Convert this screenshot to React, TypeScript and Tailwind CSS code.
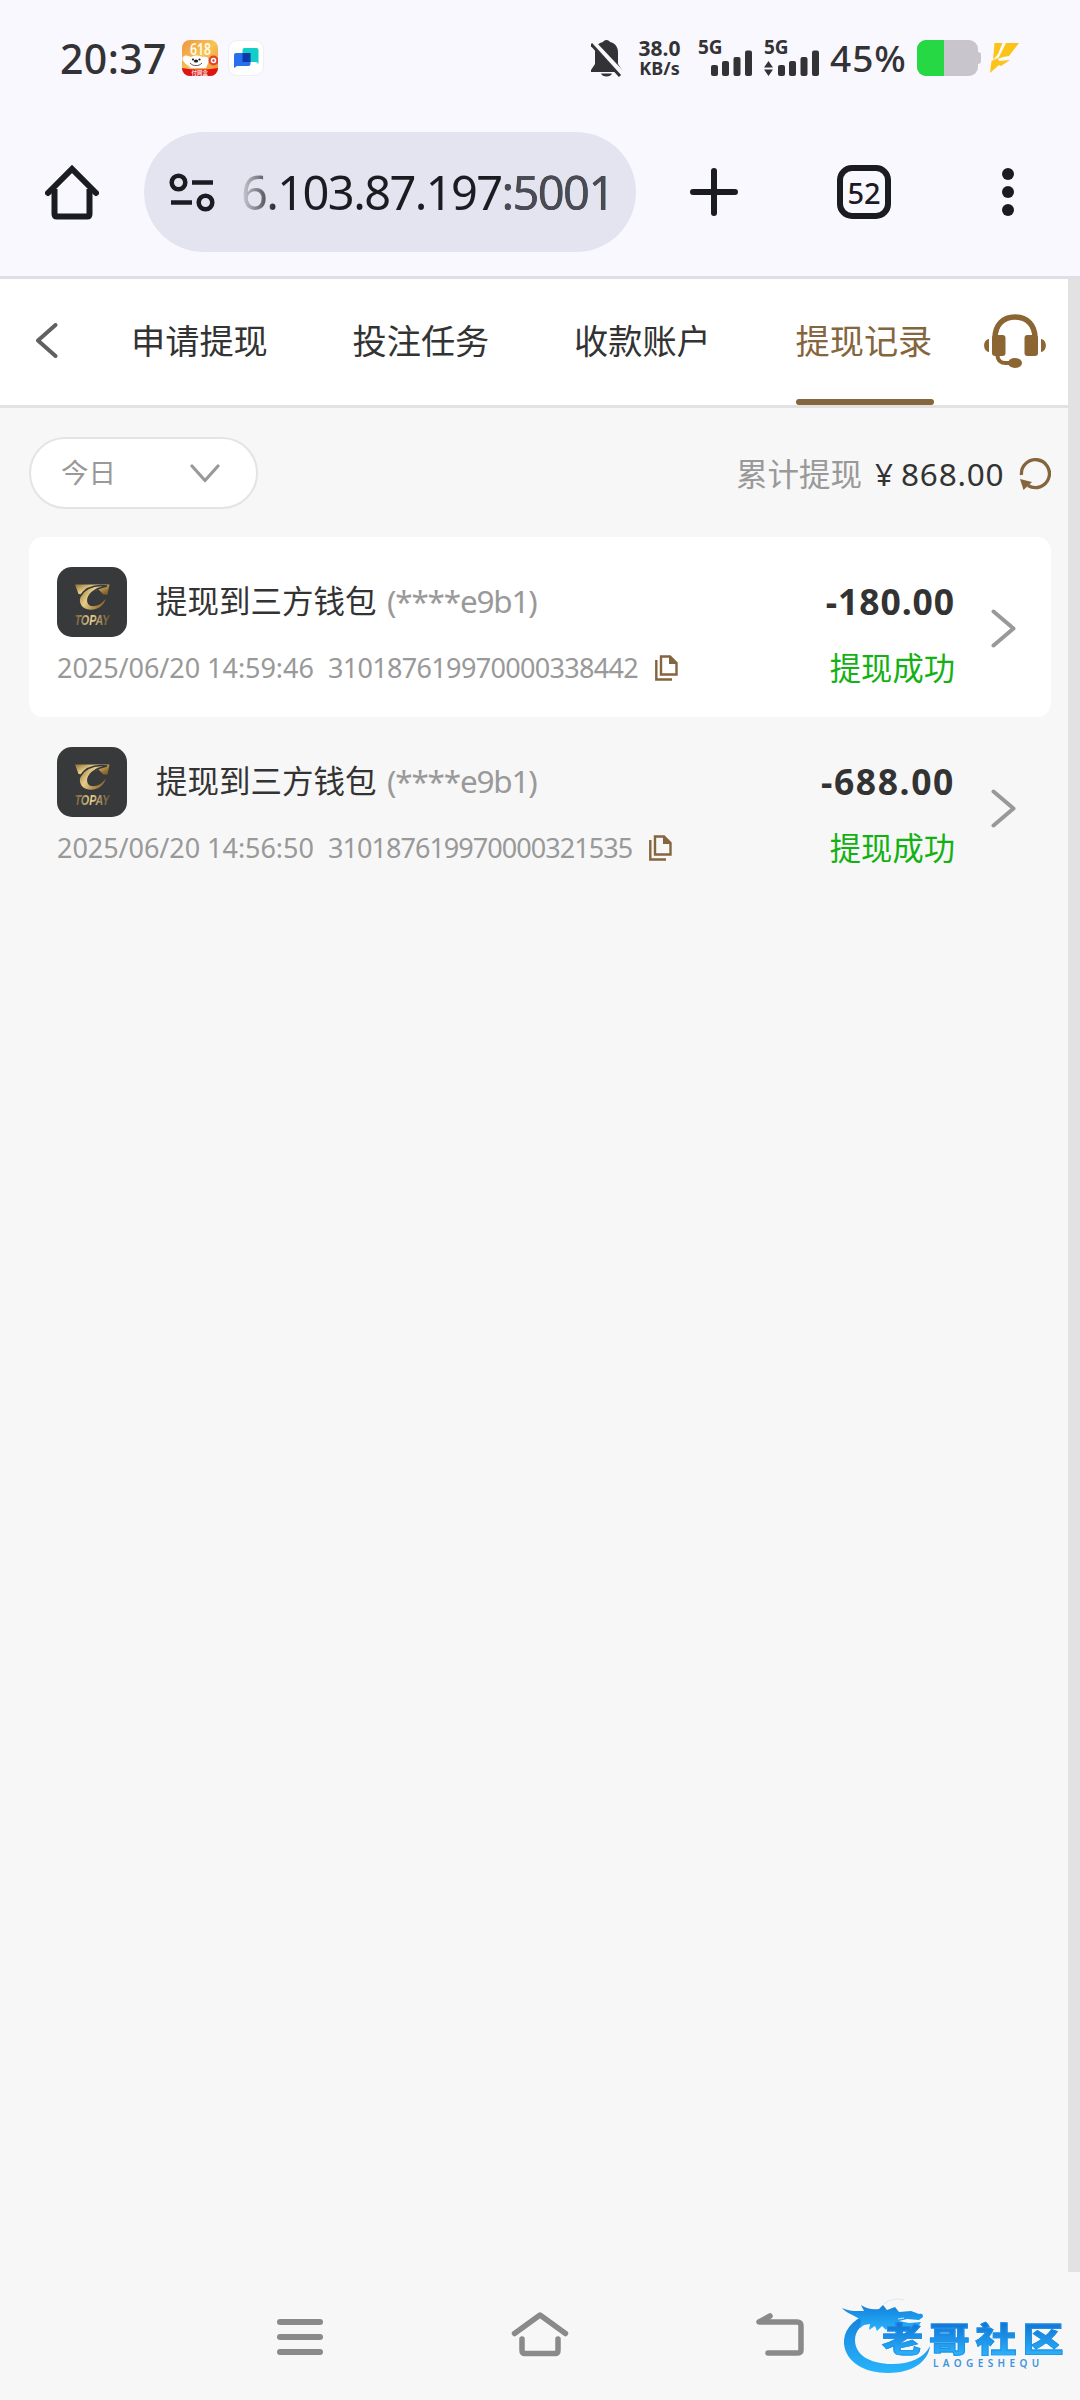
interface Withdrawal {
  id: string
  time: string
  amount: string
  account: string
}

const withdrawals: Withdrawal[] = [
  { id: "310187619970000338442", time: "2025/06/20 14:59:46", amount: "-180.00", account: "(****e9b1)" },
  { id: "310187619970000321535", time: "2025/06/20 14:56:50", amount: "-688.00", account: "(****e9b1)" },
]

const tabs = ["申请提现", "投注任务", "收款账户", "提现记录"]

function SignalBars() {
  return (
    <svg className="w-[41px] h-[26px]" viewBox="0 0 41 26" fill="#333335">
      <rect x="0" y="15" width="7" height="11" rx="2" />
      <rect x="11" y="11" width="7" height="15" rx="2" />
      <rect x="22.5" y="7" width="7" height="19" rx="2" />
      <rect x="34" y="0.5" width="7" height="25.5" rx="2" />
    </svg>
  )
}

function ShopAppIcon() {
  return (
    <svg className="w-9 h-9 ml-[17px]" viewBox="0 0 36 36">
      <defs>
        <linearGradient id="shop" x1="0" y1="0" x2="1" y2="1">
          <stop offset="0" stopColor="#ee9440" />
          <stop offset="0.5" stopColor="#f8c456" />
          <stop offset="1" stopColor="#ee8a35" />
        </linearGradient>
        <clipPath id="shopClip">
          <rect width="36" height="36" rx="8" />
        </clipPath>
      </defs>
      <g clipPath="url(#shopClip)">
        <rect width="36" height="36" fill="url(#shop)" />
        <path d="M1 17c3-3 5-1 8 0 3-2 8-2 11 0 4-1 7 0 7 4l-3 7H9c-3-3-5-3-7-6-2-2-2-4-1-5z" fill="#fff" />
        <circle cx="11" cy="19.500" r="1.100" fill="#222" />
        <circle cx="17.500" cy="19.500" r="1.100" fill="#222" />
        <ellipse cx="14" cy="21" rx="2.200" ry="1.500" fill="#222" />
        <path d="M8 23c3 3.500 9 3.500 12 0" stroke="#555" fill="none" />
        <circle cx="31.500" cy="20.500" r="5" fill="#e2432c" />
        <circle cx="31.500" cy="20.500" r="2" fill="none" stroke="#fff" strokeWidth="1.500" />
        <path d="M0 28q18 3 36 0v8H0z" fill="#dd1414" />
      </g>
      <text x="8" y="14.500" fontSize="16" fontWeight="600" fill="#fffbe6" fontFamily="Noto Sans" textLength="21" lengthAdjust="spacingAndGlyphs">
        618
      </text>
      <text x="9.500" y="34.500" fontSize="5.500" fontWeight="700" fill="#fbd9d9" fontFamily="Noto Sans CJK SC">
        付网盒
      </text>
    </svg>
  )
}

function ChatAppIcon() {
  return (
    <div className="w-9 h-9 ml-[10px] rounded-[9px] bg-white border border-[#eeeef4] flex items-center justify-center">
      <svg className="w-[25px] h-5" viewBox="0 0 25 20">
        <path d="M8.500 2q0-2 2-2h12q2 0 2 2v14l-2-2h-14z" fill="#12cfc6" />
        <path d="M0 7q0-2 2-2h14.500v11q0 2-2 2H3l-3 2z" fill="#2970ee" />
        <path d="M8.500 5h8v9h-8z" fill="#0b3ba8" />
      </svg>
    </div>
  )
}

function StatusBar() {
  return (
    <div className="flex h-[116px] items-center pl-[60px] text-[#333335]">
      <span className="w-[105px] text-[41px] leading-none font-medium tracking-[0.4px] whitespace-nowrap">20:37</span>
      <ShopAppIcon />
      <ChatAppIcon />
      <svg className="w-[31px] h-[37px] ml-[327px]" viewBox="0 0 31 37">
        <path d="M15.500 0c2 0 3 1 3.500 2 5 1 8 5 8 10v12l4 6v2H0v-2l4-6V12C4 7 7 3 12 2c.5-1 1.500-2 3.500-2z" fill="#333335" />
        <path d="M10 33.500h11c-1 4-10 4-11 0z" fill="#333335" />
        <path d="M0 1l32 34" stroke="#f9f8ff" strokeWidth="6" />
        <path d="M0 4l29 32" stroke="#333335" strokeWidth="3" />
      </svg>
      <div className="ml-[14px] w-[47px] flex flex-col items-center font-bold whitespace-nowrap">
        <span className="text-[21px] leading-[21px]">38.0</span>
        <span className="text-[18px] leading-[19px]">KB/s</span>
      </div>
      <div className="ml-[15px] h-9 w-[54px] flex flex-col">
        <span className="text-[19px] leading-[14px] h-[10px] font-bold">5G</span>
        <div className="pl-[13px]">
          <SignalBars />
        </div>
      </div>
      <div className="ml-[12px] h-9 w-[55px] flex flex-col">
        <span className="text-[19px] leading-[14px] h-[10px] font-bold">5G</span>
        <div className="flex items-end gap-[5px]">
          <svg className="w-[9px] h-[15px]" viewBox="0 0 9 15" fill="#333335">
            <path d="M4.500 0L9 6.500H0zM4.500 15L9 8.500H0z" />
          </svg>
          <SignalBars />
        </div>
      </div>
      <span className="ml-[11px] w-[76px] pb-[2px] text-[37px] leading-none font-medium tracking-[1px] whitespace-nowrap">45%</span>
      <div className="ml-[11px] flex items-center">
        <div className="w-[61px] h-9 rounded-[9px] bg-[#c9c5cd] overflow-hidden">
          <div className="w-[27px] h-full bg-[#27d845]" />
        </div>
        <div className="w-[3px] h-3 rounded-r-sm bg-[#c9c5cd]" />
      </div>
      <svg className="w-[30px] h-[30px] ml-[9px]" viewBox="0 0 30 30" fill="#fcc419">
        <path d="M4.500 0h8L8 11l-5 6zM16 0h13L19 13l-6 1-5 2z" />
        <path d="M1.500 18l6-3 1.500 3 11-1-9 6-2-1-9 8z" />
      </svg>
    </div>
  )
}

function BrowserBar() {
  return (
    <div className="flex h-[160px] items-start pt-4 pl-[45px] text-[#1b1b22]">
      <div className="flex h-[120px] items-center">
        <svg className="w-[54px] h-[56px]" viewBox="0 0 54 56" fill="none" stroke="#1b1b22" strokeWidth="6">
          <path d="M3 29L27 5l24 24" strokeLinecap="round" />
          <path d="M9.500 25v25q0 2.500 2.500 2.500h30q2.500 0 2.500-2.500V25" />
        </svg>
        <div className="ml-[45px] w-[492px] h-[120px] rounded-full bg-[#e4e4f0] flex items-center pl-[25px]">
          <svg className="w-[46px] h-[39px]" viewBox="0 0 46 39" fill="none" stroke="#1b1b22" strokeWidth="4.500">
            <circle cx="9.500" cy="9.500" r="6.800" />
            <circle cx="36.500" cy="29.500" r="6.800" />
            <path d="M23 9.500h21M2 29.500h21" />
          </svg>
          <span className="ml-[26px] w-[372px] text-[47px] leading-none tracking-[-1.600px] whitespace-nowrap bg-linear-to-r from-[#1b1b22]/10 via-[#1b1b22] via-10% to-[#1b1b22] bg-clip-text text-transparent">
            6.103.87.197<span className="text-[#4b4b55]">:5001</span>
          </span>
        </div>
        <svg className="w-12 h-12 ml-[54px]" viewBox="0 0 48 48" stroke="#1b1b22" strokeWidth="6" strokeLinecap="round">
          <path d="M24 3v42M3 24h42" />
        </svg>
        <div className="ml-[99px] w-[54px] h-[54px] rounded-[15px] border-[6px] border-[#1b1b22] flex items-center justify-center text-[29px] leading-none font-medium">
          52
        </div>
        <svg className="w-3 h-12 ml-[111px]" viewBox="0 0 12 48" fill="#1b1b22">
          <circle cx="6" cy="6" r="6" />
          <circle cx="6" cy="24" r="6" />
          <circle cx="6" cy="42" r="6" />
        </svg>
      </div>
    </div>
  )
}

function TabHeader() {
  return (
    <header className="flex h-[129px] bg-white border-b-[3px] border-[#e2e2e2] pl-9">
      <svg className="w-[22px] h-[35px] mt-[44px]" viewBox="0 0 22 35" fill="none" stroke="#606060" strokeWidth="4" strokeLinecap="round" strokeLinejoin="round">
        <path d="M19.500 2L2 17.500l17.500 15.500" />
      </svg>
      <nav className="ml-[73px] flex gap-[83.500px]">
        {tabs.map((tab) => (
          <div
            key={tab}
            className={
              tab === "提现记录"
                ? "flex w-[138px] flex-col justify-between text-[#84653d]"
                : "flex w-[138px] flex-col justify-between text-[#333333]"
            }
          >
            <span className="mt-[37px] text-[34.200px] leading-[50px] whitespace-nowrap">{tab}</span>
            {tab === "提现记录" && <div className="h-[6px] rounded-full bg-[#84653d]" />}
          </div>
        ))}
      </nav>
      <svg className="w-[62px] h-[55px] ml-[50px] mt-[35px]" viewBox="0 0 62 55" fill="#8b6632">
        <path d="M11 24C11 11 19 3 31 3s20 8 20 21" fill="none" stroke="#8b6632" strokeWidth="5.500" />
        <rect x="8" y="21" width="13.500" height="21" rx="3" />
        <rect x="40.500" y="21" width="13.500" height="21" rx="3" />
        <path d="M5 25v13c-6.500-1-6.500-12 0-13zM57 25v13c6.500-1 6.500-12 0-13z" />
        <path d="M13.500 41c0 6 4 8 8 8h6" fill="none" stroke="#8b6632" strokeWidth="4" />
        <ellipse cx="31" cy="49" rx="7" ry="5" />
      </svg>
    </header>
  )
}

function FilterRow() {
  return (
    <div className="flex items-center justify-between pt-[29px]">
      <div className="flex h-[72px] w-[229px] items-center justify-between rounded-full border-2 border-[#e4e4e4] bg-white pl-[30px] pr-[36px]">
        <span className="text-[27.500px] leading-none text-[#999999]">今日</span>
        <svg className="w-[30px] h-[19px]" viewBox="0 0 30 19" fill="none" stroke="#999999" strokeWidth="3.200" strokeLinecap="round" strokeLinejoin="round">
          <path d="M2 2l13 14.500L28 2" />
        </svg>
      </div>
      <div className="flex items-center pt-[2px] text-[31.500px] leading-none text-[#333333]">
        <span className="w-[126px] text-[#999999] whitespace-nowrap">累计提现</span>
        <span className="ml-[13px] w-[20px]">¥</span>
        <span className="ml-[6px] w-[106px] tracking-[0.800px] whitespace-nowrap">868.00</span>
        <svg className="w-8 h-8 ml-[12px]" viewBox="0 0 32 32" fill="none" stroke="#84653d" strokeWidth="3.300">
          <path d="M2.500 17A14 14 0 1 1 9 27.500" />
          <path d="M1 21l12 3-8.500 8z" fill="#84653d" stroke="none" />
        </svg>
      </div>
    </div>
  )
}

function TopayLogo() {
  return (
    <svg className="w-[70px] h-[70px]" viewBox="0 0 70 70">
      <defs>
        <linearGradient id="gold" x1="0" y1="0" x2="1" y2="0.600">
          <stop offset="0" stopColor="#8f6c35" />
          <stop offset="0.450" stopColor="#e6cd88" />
          <stop offset="1" stopColor="#8a6428" />
        </linearGradient>
        <linearGradient id="goldText" x1="0" y1="0" x2="1" y2="0">
          <stop offset="0" stopColor="#6b5434" />
          <stop offset="0.450" stopColor="#ecd592" />
          <stop offset="1" stopColor="#5c482c" />
        </linearGradient>
      </defs>
      <rect width="70" height="70" rx="15" fill="#38393b" />
      <path d="M18 17.500h34.500l-2 10h-4l-5-5-12 5.500-8-1z" fill="url(#gold)" />
      <path d="M50 19c-12-1.500-22 2-27 10.500-3 7 2 13.500 10 14 9 .5 16-5 17-15-4 7-9 10-14 10-4 0-6-3-5-7 2-6 9-10.500 19-12.500z" fill="url(#gold)" stroke="#38393b" strokeWidth="1.500" />
      <text x="17.500" y="58" fontSize="15" fontStyle="italic" fontWeight="700" fill="url(#goldText)" fontFamily="Liberation Sans Narrow, Liberation Sans" textLength="35" lengthAdjust="spacingAndGlyphs">
        TOPAY
      </text>
    </svg>
  )
}

function CopyIcon() {
  return (
    <svg className="w-[23px] h-[26px]" viewBox="0 0 23 26" fill="none" stroke="#84653d" strokeWidth="2.400">
      <path d="M6 1.500h9l6.500 6.500v11.500H6z" />
      <path d="M14 1v8h8z" fill="#84653d" stroke="none" />
      <path d="M1.300 5v19.500H17" />
    </svg>
  )
}

function WithdrawalRow({ item, highlighted }: { item: Withdrawal; highlighted: boolean }) {
  return (
    <div className={highlighted ? "flex h-[180px] rounded-[14px] bg-white pl-7" : "flex h-[180px] rounded-[14px] pl-7"}>
      <div className="w-[640px] pt-[30px]">
        <div className="flex h-[70px] items-center">
          <TopayLogo />
          <span className="ml-[29px] w-[221px] pb-[2px] text-[31.500px] leading-none text-[#333333] whitespace-nowrap">提现到三方钱包</span>
          <span className="ml-[10px] pb-[3px] text-[31.500px] leading-none tracking-[-1.200px] text-[#999999]">{item.account}</span>
        </div>
        <div className="mt-[13px] flex h-[34px] items-center text-[27px] leading-none text-[#999999] whitespace-nowrap">
          <span className="w-[271px] tracking-[-0.050px]">{item.time}</span>
          <span className={highlighted ? "tracking-[-0.680px]" : "tracking-[-0.960px]"}>{item.id}</span>
          <div className="ml-[17px] pt-[2px]">
            <CopyIcon />
          </div>
        </div>
      </div>
      <div className="w-[258px] pt-[39px] text-right">
        <div
          className={
            highlighted
              ? "text-[35.500px] leading-[50px] tracking-[0.900px] font-bold text-[#333333]"
              : "text-[35.500px] leading-[50px] tracking-[1.600px] font-bold text-[#333333]"
          }
        >
          {item.amount}
        </div>
        <div className="mt-[17px] text-[31.300px] leading-[50px] text-[#13b113]">提现成功</div>
      </div>
      <svg className="w-[25px] h-[39px] ml-[36px] mt-[72px]" viewBox="0 0 25 39" fill="none" stroke="#999999" strokeWidth="4" strokeLinecap="round" strokeLinejoin="round">
        <path d="M2.500 2.500L22.500 19.500 2.500 36.500" />
      </svg>
    </div>
  )
}

function SystemNav() {
  return (
    <div className="flex h-[128px] items-start bg-[#f7f7f7] pl-[277px] pt-10">
      <div className="mt-[7px] flex w-[46px] flex-col gap-[9px]">
        <div className="h-[6px] rounded-[3px] bg-[#8a8a8a]" />
        <div className="h-[6px] rounded-[3px] bg-[#8a8a8a]" />
        <div className="h-[6px] rounded-[3px] bg-[#8a8a8a]" />
      </div>
      <svg className="w-[58px] h-[46px] ml-[188px]" viewBox="0 0 58 46" fill="none" stroke="#8a8a8a" strokeWidth="5.500" strokeLinecap="round" strokeLinejoin="round">
        <path d="M3.500 21.500L29 3l25.500 18.500" />
        <path d="M11 27v11.500q0 3 3 3h30q3 0 3-3V27" />
      </svg>
      <svg className="w-[50px] h-[46px] ml-[187px]" viewBox="0 0 50 46" fill="none" stroke="#8a8a8a" strokeWidth="5.500" strokeLinecap="round" strokeLinejoin="round">
        <path d="M14 4L3 10h38q4 0 4 4v24q0 3-4 3H12" />
      </svg>
    </div>
  )
}

function Watermark() {
  return (
    <div className="absolute left-[840px] top-[2296px] h-[82px] w-[230px]">
      <svg className="absolute left-0 top-0 w-[92px] h-[82px]" viewBox="0 0 92 82">
        <defs>
          <linearGradient id="dragon" x1="0" y1="0" x2="0" y2="1">
            <stop offset="0" stopColor="#1480dc" />
            <stop offset="1" stopColor="#28b4fb" />
          </linearGradient>
        </defs>
        <path d="M28 18C11 24 3 36 4 48c2 18 20 29 44 29 24 0 40-11 42-27-6 12-20 18-38 18-22 0-37-9-37-24 0-9 6-16 19-21z" fill="url(#dragon)" />
        <path
          d="M2 12c8 4 16 3 22 3l-3-6c6 4 12 5 18 4l4-4 4 5 8-3 4 5 12-1 8 3c3-1 4 0 4 3l-4 3-12-1-8 2 10 2 12-1-3 5-14 1-8-3 1 4-8-3-3 4-4-4-5 5-2-5-6 4 1-6-6 1-4 3 1-8C14 19 6 17 2 12z"
          fill="url(#dragon)"
        />
        <path d="M58 23l6-1M44 8c6-5 14-6 20-4" fill="none" stroke="#d5e9fa" />
      </svg>
      <div className="absolute left-[42px] top-[26px] flex flex-col items-start">
        <span className="origin-top scale-y-[0.82] bg-linear-to-b from-[#1272d4] to-[#2cb5fb] bg-clip-text text-[41px] leading-[42px] font-black tracking-[5.800px] text-transparent whitespace-nowrap [-webkit-text-stroke:1px_#2090e6]">
          老哥社区
        </span>
        <span className="ml-[51px] -mt-[6px] text-[10px] leading-[11px] font-semibold tracking-[4.400px] text-[#3d95de]">LAOGESHEQU</span>
      </div>
    </div>
  )
}

export default function App() {
  return (
    <div className="relative flex h-[2400px] w-[1080px] flex-col overflow-hidden bg-[#f9f8ff] font-['Noto_Sans','Noto_Sans_CJK_SC',sans-serif]">
      <StatusBar />
      <BrowserBar />
      <div className="h-[3px] bg-[#dfdfe7]" />
      <div className="flex flex-1">
        <div className="w-[1068px] bg-[#f7f7f7]">
          <TabHeader />
          <main className="pl-[29px] pr-[17px]">
            <FilterRow />
            <div className="mt-7">
              {withdrawals.map((item, i) => (
                <WithdrawalRow key={item.id} item={item} highlighted={i === 0} />
              ))}
            </div>
          </main>
        </div>
        <div className="w-3 bg-[#e2e2e2]" />
      </div>
      <SystemNav />
      <Watermark />
    </div>
  )
}
